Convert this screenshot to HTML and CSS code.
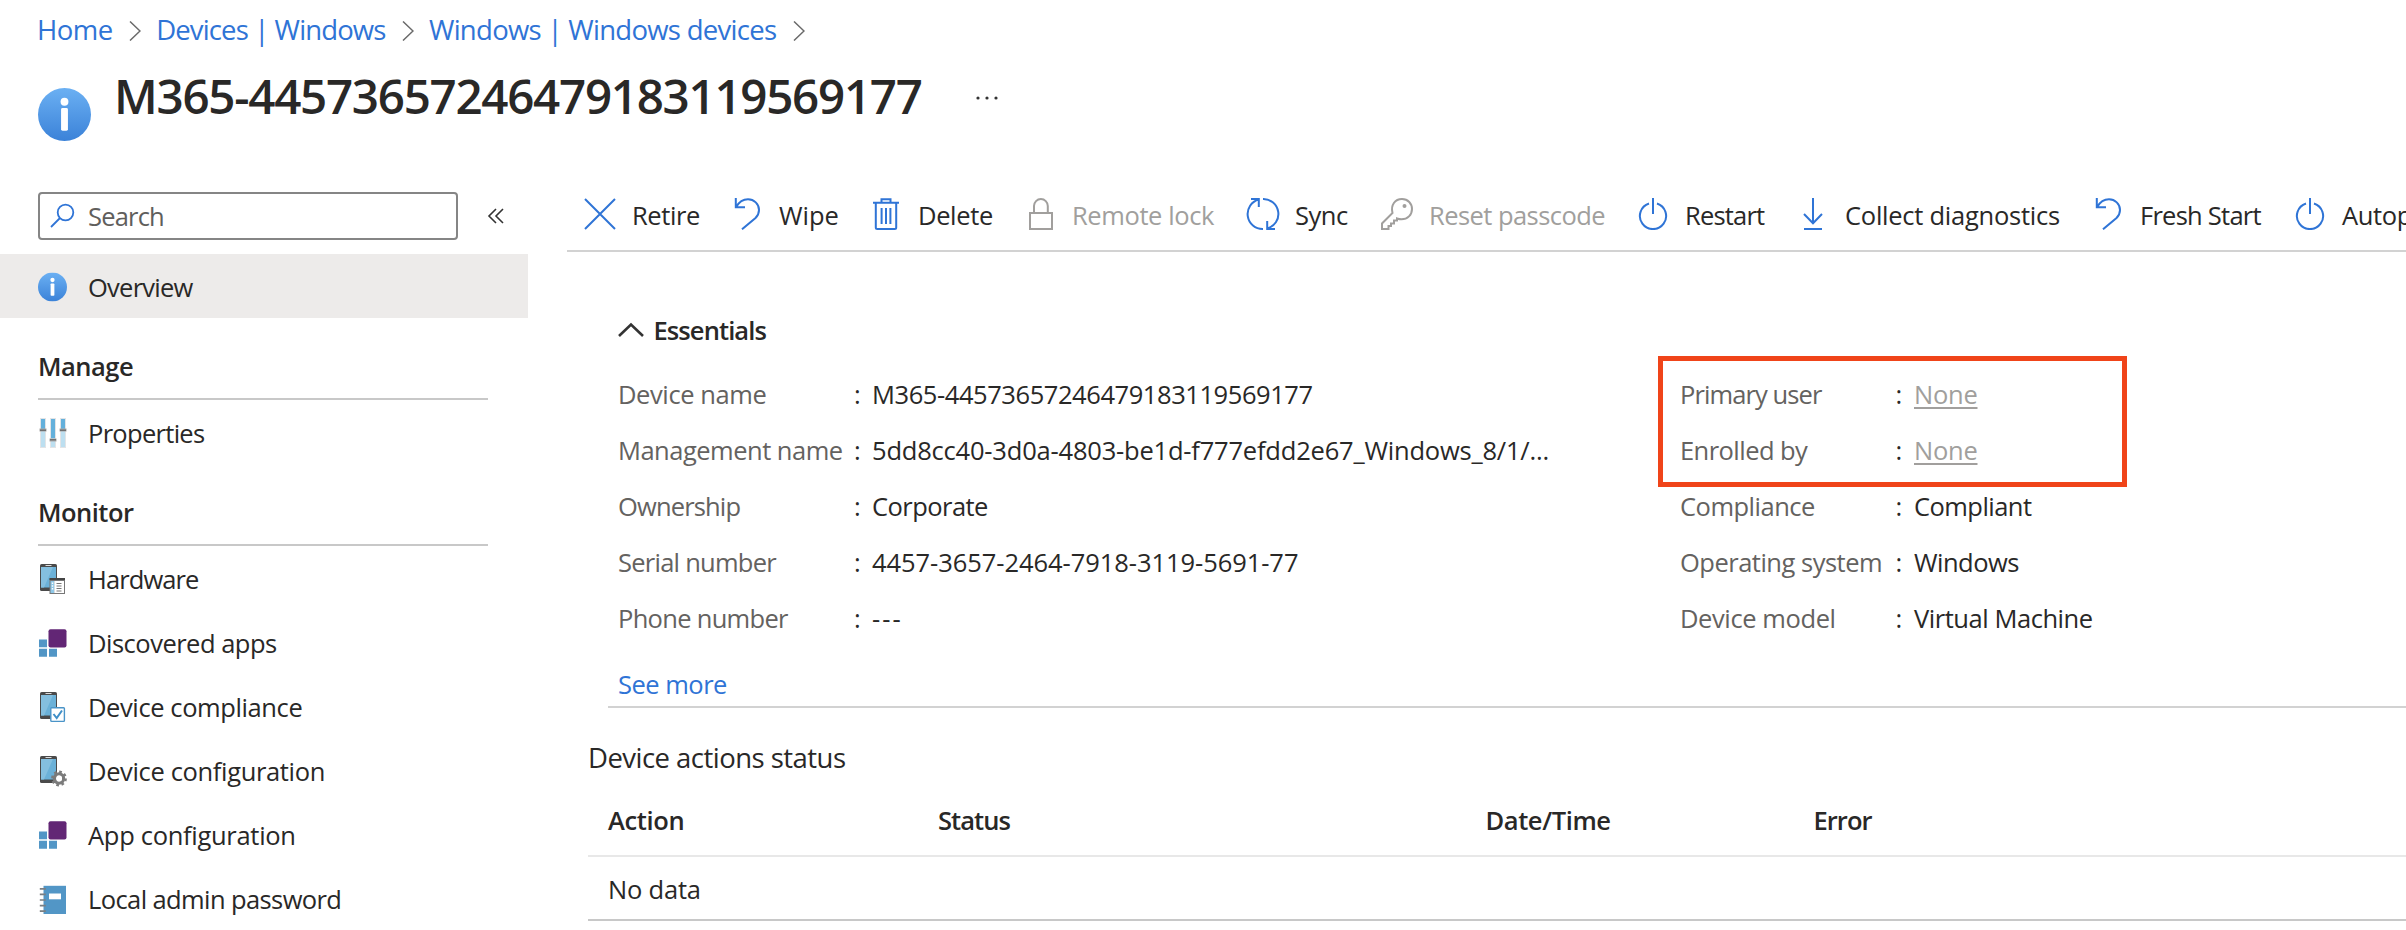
FILE: index.html
```html
<!DOCTYPE html>
<html lang="en">
<head>
<meta charset="utf-8">
<title>M365-44573657246479183119569177</title>
<link rel="stylesheet" href="styles.css">
</head>
<body>
<svg class="defs" aria-hidden="true">
  <defs>
    <linearGradient id="info-fill" x1="0" y1="0" x2="0" y2="1"><stop offset="0" stop-color="#6bb0f3"/><stop offset="1" stop-color="#3b82d8"/></linearGradient>
    <symbol id="info" viewBox="0 0 54 54"><circle cx="27" cy="27" r="27" fill="url(#info-fill)"/><circle cx="27" cy="14" r="4" fill="#fff"/><rect x="23.5" y="20.5" width="7" height="23" rx="1.5" fill="#fff"/></symbol>
    <symbol id="phone" viewBox="0 0 32 32"><rect x="2" y="2" width="17" height="27" rx="1.6" fill="#4a4a4a"/><rect x="3" y="5" width="15" height="20.500" fill="#6bb1d8"/><path d="M3 5H15L6 25.500H3Z" fill="#84bfdf"/><rect x="7.500" y="3" width="6" height="1" fill="#ddd"/></symbol>
    <symbol id="apps" viewBox="0 0 32 32"><rect x="10.500" y="3.200" width="18" height="18.200" rx="2" fill="#622675"/><path d="M1 13.500h8v7.700H1zM1 22.700h8v8H1zM11 22.700h8v8H11z" fill="#5296c6"/></symbol>
    <symbol id="undo" viewBox="0 0 32 32"><path d="M4.800 0V9.300H14M5 9C8 4 12 1.200 17 1.200C23 1.200 28 6 28 12C28 15.500 26.500 18 24.500 20L11 31.300"/></symbol>
    <symbol id="power" viewBox="0 0 32 32"><path d="M12 5.500A13.100 13.100 0 1 0 20 5.500M16 0V16"/></symbol>
    <symbol id="crumb" viewBox="0 0 12 20"><path d="M1 .5L11 10L1 19.500"/></symbol>
  </defs>
</svg>

<header class="header">
  <nav class="crumbs">
    <a class="t-home">Home</a><svg class="sep"><use href="#crumb"/></svg>
    <a class="t-devices">Devices | Windows</a><svg class="sep"><use href="#crumb"/></svg>
    <a class="t-windows-devices">Windows | Windows devices</a><svg class="sep"><use href="#crumb"/></svg>
  </nav>
  <div class="title-row">
    <svg class="title-icon"><use href="#info"/></svg>
    <h1 class="title">M365-44573657246479183119569177</h1>
    <svg class="more" viewBox="0 0 24 6"><circle cx="3" cy="3" r="1.600"/><circle cx="12" cy="3" r="1.600"/><circle cx="21" cy="3" r="1.600"/></svg>
  </div>
</header>

<div class="body">
  <aside class="sidebar">
    <div class="search-row">
      <div class="search"><svg class="search-icon" viewBox="0 0 26 26"><circle cx="15.500" cy="9.500" r="7.800"/><path d="M10 15L1 24"/></svg><span class="k80">Search</span></div>
      <svg class="collapse" viewBox="0 0 16 16"><path d="M8 1L1 8L8 15M15 1L8 8L15 15"/></svg>
    </div>
    <div class="item active"><svg class="ico" viewBox="0 0 32 32"><use href="#info" x="0" y="2.500" width="29" height="29"/></svg><span class="k75">Overview</span></div>
    <h2 class="group k50">Manage</h2>
    <div class="item"><svg class="ico" viewBox="0 0 32 32">
      <path d="M2 2h6v30H2zM12 2h6v30h-6zM22 2h6v30h-6z" fill="#e2e4e6"/>
      <path d="M3 3h4v28H3zM13 3h4v28h-4zM23 3h4v28h-4z" fill="#bddff0"/>
      <path d="M3 3h4v10H3zM13 3h4v19h-4zM23 3h4v10h-4z" fill="#64b0db"/>
      <path d="M1.500 12.500h7v3h-7zM11.500 22.500h7v3h-7zM21.500 12.500h7v3h-7z" fill="#aaa"/>
      <path d="M2 13.500h6v1.500H2zM12 23h6v1.500h-6zM22 13.500h6v1.500h-6z" fill="#707070"/></svg><span class="k70">Properties</span></div>
    <h2 class="group k50">Monitor</h2>
    <div class="item"><svg class="ico" viewBox="0 0 32 32"><use href="#phone" width="32" height="32"/><path d="M11.500 16.500h15.500V32H11.500z" fill="#777"/><path d="M12.500 19h3.800v12h-3.800z" fill="#8fc8e8"/><path d="M16.300 19H26v12h-9.700z" fill="#fff"/><path d="M11.500 17h15.500" stroke="#444" stroke-width="2"/><path d="M18.500 21.500h5M18.500 24h5M18.500 26.500h5M18.500 29h5" stroke="#777" stroke-width="1.200"/><path d="M14.500 20.500v7" stroke="#fff" stroke-width="1.400" stroke-dasharray="1.500 1.200"/></svg><span class="k90">Hardware</span></div>
    <div class="item"><svg class="ico"><use href="#apps"/></svg><span class="k50">Discovered apps</span></div>
    <div class="item"><svg class="ico" viewBox="0 0 32 32"><use href="#phone" width="32" height="32"/><rect x="12.800" y="17.800" width="13.600" height="13.600" rx=".8" fill="#fff" stroke="#4a94c8" stroke-width="1.400"/><path d="M15.500 24l3.200 4L24 20.500" fill="none" stroke="#3f8fc8" stroke-width="2"/></svg><span class="k40">Device compliance</span></div>
    <div class="item"><svg class="ico" viewBox="0 0 32 32"><use href="#phone" width="32" height="32"/><g fill="none" stroke="#7b7b7b"><circle cx="21" cy="24.500" r="4.600" stroke-width="3.200"/><circle cx="21" cy="24.500" r="6.700" stroke-width="2.400" stroke-dasharray="2.630 2.630"/></g><circle cx="21" cy="24.500" r="3" fill="#fff"/></svg><span class="k35">Device configuration</span></div>
    <div class="item"><svg class="ico"><use href="#apps"/></svg><span class="k30">App configuration</span></div>
    <div class="item"><svg class="ico" viewBox="0 0 32 32"><path d="M5.500 3.800H28V32H5.500z" fill="#5296c6"/><path d="M11 11.500h12v5.800H11z" fill="#fff"/><path d="M1.800 6.800h6M1.800 12.400h6M1.800 18h6M1.800 23.600h6M1.800 29.200h6" stroke="#7a7f83" stroke-width="1.700"/></svg><span class="k60">Local admin password</span></div>
  </aside>

  <main class="main">
    <div class="toolbar">
      <button class="cmd"><svg><path d="M1 1L31 31M31 1L1 31"/></svg><span class="k40">Retire</span></button>
      <button class="cmd"><svg><use href="#undo"/></svg><span>Wipe</span></button>
      <button class="cmd"><svg><path d="M3 4.800H29M11.500 4.500V1.200H20.500V4.500M5.800 5V29.500Q5.800 31 7.300 31H24.700Q26.200 31 26.200 29.500V5M11.600 10V26M16 10V26M20.400 10V26"/></svg><span class="k35">Delete</span></button>
      <button class="cmd disabled"><svg><path d="M6 15H28V31H6ZM10 15V8A6.900 6.900 0 0 1 23.800 8V15"/></svg><span class="k40">Remote lock</span></button>
      <button class="cmd"><svg><path d="M4 1H11.800V9M11.800 1.500A15 15 0 0 0 16 31M16 1A15 15 0 0 1 20.200 30.500M28 31H20.200V23"/></svg><span class="k45">Sync</span></button>
      <button class="cmd disabled"><svg><path d="M1 31V25.500L11.500 15C9.500 7 14 1 21 1C27 1 31 5.500 31 11C31 17 26.500 21.300 20.500 21.300C19 21.300 17.500 21 16 20.500V22.500H13V25.500H10V28H7.500V31Z"/><circle class="solid" cx="23.500" cy="8" r="2"/></svg><span class="k55">Reset passcode</span></button>
      <button class="cmd"><svg><use href="#power"/></svg><span class="k80">Restart</span></button>
      <button class="cmd"><svg><path d="M16 0V25M7 16L16 25.200L25 16M7 31H25"/></svg><span class="k25">Collect diagnostics</span></button>
      <button class="cmd"><svg><use href="#undo"/></svg><span class="k75">Fresh Start</span></button>
      <button class="cmd"><svg><use href="#power"/></svg><span class="k35">Autopilot Reset</span></button>
    </div>

    <section class="essentials">
      <div class="ess-head"><svg class="chev" viewBox="0 0 26 14"><path d="M1 13L13 1.500L25 13"/></svg><h3 class="k90">Essentials</h3></div>
      <div class="ess-cols">
        <dl class="props left">
          <div class="prop"><dt class="k40">Device name</dt><i>:</i><dd class="k43">M365-44573657246479183119569177</dd></div>
          <div class="prop"><dt class="k50">Management name</dt><i>:</i><dd class="k20">5dd8cc40-3d0a-4803-be1d-f777efdd2e67_Windows_8/1/...</dd></div>
          <div class="prop"><dt class="k85">Ownership</dt><i>:</i><dd class="k55">Corporate</dd></div>
          <div class="prop"><dt class="k75">Serial number</dt><i>:</i><dd class="k06">4457-3657-2464-7918-3119-5691-77</dd></div>
          <div class="prop"><dt class="k70">Phone number</dt><i>:</i><dd class="dashes">---</dd></div>
        </dl>
        <dl class="props right">
          <div class="prop"><dt class="k90">Primary user</dt><i>:</i><dd class="none k25">None</dd></div>
          <div class="prop"><dt class="k55">Enrolled by</dt><i>:</i><dd class="none k25">None</dd></div>
          <div class="prop"><dt class="k50">Compliance</dt><i>:</i><dd class="k55">Compliant</dd></div>
          <div class="prop"><dt class="k50">Operating system</dt><i>:</i><dd class="k50">Windows</dd></div>
          <div class="prop"><dt class="k40">Device model</dt><i>:</i><dd class="k45">Virtual Machine</dd></div>
          <span class="highlight"></span>
        </dl>
      </div>
      <div class="see-more"><a class="k50">See more</a></div>
    </section>

    <section class="actions">
      <h3 class="actions-title">Device actions status</h3>
      <div class="row head"><span class="k35">Action</span><span class="k95">Status</span><span class="k40">Date/Time</span><span class="k95">Error</span></div>
      <div class="row data"><span class="k20">No data</span></div>
    </section>
  </main>
</div>
</body>
</html>
```
FILE: styles.css
```css
* { box-sizing: border-box; }
html, body { margin: 0; background: #fff; overflow: hidden; }
body { width: 2406px; height: 930px; color: #292827; font: 400 25.5px/36px "Open Sans", "Noto Sans", sans-serif; white-space: nowrap; font-variant-ligatures: none; }
h1, h2, h3, dl, dd, dt { margin: 0; font: inherit; }
svg { flex: none; fill: none; overflow: visible; }
.defs { position: absolute; width: 0; height: 0; }

/* letter tracking, in hundredths of a pixel */
.k06 { letter-spacing: -.06px; }
.k20 { letter-spacing: -.2px; }
.k25 { letter-spacing: -.25px; }
.k30 { letter-spacing: -.3px; }
.k35 { letter-spacing: -.35px; }
.k40 { letter-spacing: -.4px; }
.k43 { letter-spacing: -.43px; }
.k45 { letter-spacing: -.45px; }
.k50 { letter-spacing: -.5px; }
.k55 { letter-spacing: -.55px; }
.k60 { letter-spacing: -.6px; }
.k70 { letter-spacing: -.7px; }
.k75 { letter-spacing: -.75px; }
.k80 { letter-spacing: -.8px; }
.k85 { letter-spacing: -.85px; }
.k90 { letter-spacing: -.9px; }
.k95 { letter-spacing: -.95px; }
.dashes { letter-spacing: 2px; }

.header { height: 178px; padding: 10px 0 0 37px; }
.crumbs { display: flex; align-items: center; height: 40px; font-size: 27.5px; line-height: 40px; color: #2f74d6; }
.t-home { letter-spacing: -.5px; }
.t-devices { letter-spacing: -.88px; }
.t-windows-devices { letter-spacing: -.71px; }
.sep { width: 12px; height: 20px; margin: 2px 15px 0 16.5px; stroke: #6a6a6a; stroke-width: 1.5; }
.title-row { display: flex; align-items: flex-start; padding: 16px 0 0 1px; }
.title-icon { width: 53px; height: 53px; margin-top: 22px; }
.title { margin-left: 23px; font-size: 47.5px; line-height: 60px; font-weight: 600; letter-spacing: -1.26px; }
.more { width: 24px; height: 6px; margin: 29px 0 0 53px; fill: #333; }

.body { display: grid; grid-template-columns: 528px 1839px; column-gap: 39px; }

.search-row { display: flex; align-items: center; padding: 14px 0 14px 38px; }
.search { display: flex; align-items: center; width: 420px; height: 48px; padding: 0 0 1px 10px; border: 2px solid #858585; border-radius: 4px; color: #605e5c; }
.search-icon { width: 26px; height: 26px; margin: 0 12px 0 0; stroke: #2f74d6; stroke-width: 1.8; }
.collapse { width: 16px; height: 16px; margin-left: 30px; stroke: #333; stroke-width: 1.6; }
.item { display: flex; align-items: center; gap: 18px; height: 64px; padding-left: 38px; }
.item span { padding-top: 2px; }
.item.active { background: #edebea; }
.ico { width: 32px; height: 32px; }
.group { height: 82px; margin: 0 40px 0 38px; padding-top: 30px; border-bottom: 2px solid #c8c8c8; font-weight: 600; }

.toolbar { display: grid; grid-template-columns: 147px 139px 154px 223px 134px 256px 160px 295px 202px auto; height: 74px; padding-left: 17px; border-bottom: 2px solid #d2d2d2; overflow: hidden; }
.cmd { display: flex; align-items: center; gap: 16px; padding: 0; border: 0; background: none; color: inherit; font: inherit; }
.cmd svg { width: 32px; height: 32px; stroke: #2f74d6; stroke-width: 2; }
.cmd span { padding-top: 2px; }
.cmd.disabled { color: #a19f9d; }
.cmd.disabled svg { stroke: #a19f9d; }
.cmd .solid { fill: #a19f9d; stroke: none; }

.essentials { margin-left: 41px; padding-top: 50px; border-bottom: 2px solid #d2d2d2; }
.ess-head { display: flex; align-items: center; height: 56px; padding-left: 9.5px; }
.ess-head h3 { font-weight: 600; margin-left: 10px; }
.chev { width: 26px; height: 14px; stroke: #333; stroke-width: 2.6; }
.ess-cols { display: grid; grid-template-columns: 1062px auto; margin: 8px 0 0 10px; }
.props { position: relative; }
.prop { display: grid; grid-template-columns: 236px 18px auto; height: 56px; align-items: center; }
.right .prop { grid-template-columns: 215.5px 18.5px auto; }
.prop dt { color: #646260; }
.prop i { font-style: normal; }
.none { color: #a19f9d; text-decoration: underline; text-decoration-thickness: 2px; text-underline-offset: 3px; text-decoration-skip-ink: none; }
.highlight { position: absolute; left: -22px; top: -10px; width: 469px; height: 131px; border: 5px solid #f04419; }
.see-more { height: 60px; padding: 20px 0 0 10px; color: #2f74d6; }

.actions { margin-left: 21px; }
.actions-title { padding: 32px 0 7px; font-size: 27.5px; letter-spacing: -.53px; }
.row { display: grid; grid-template-columns: 330px 547.5px 328px auto; align-items: center; padding: 1px 0 0 20px; }
.row.head { height: 74px; border-bottom: 2px solid #e8e8e8; font-weight: 600; }
.row.data { height: 64px; border-bottom: 2px solid #c8c8c8; }
```
